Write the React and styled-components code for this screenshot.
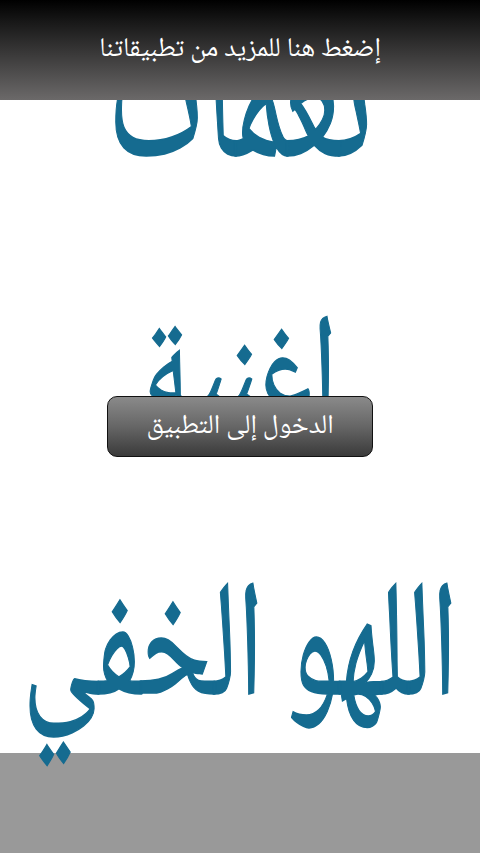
import styled, { createGlobalStyle } from "styled-components";

const GlobalStyle = createGlobalStyle`
    html, body {
        margin: 0;
        padding: 0;
        background: #ffffff;
    }
    body {
        font-family: "Noto Naskh Arabic", "DejaVu Sans", sans-serif;
    }
`;

// the poster words are stretched upward like the original splash image
const words = [
    { text: "نغمات", size: 125, box: 222, stretch: 1.6 },
    { text: "اغنية", size: 105, box: 314, stretch: 1.33 },
    { text: "اللهو الخفي", size: 110, box: 244, stretch: 1.5 },
];

export default function App() {
    return (
        <Screen dir="rtl">
            <GlobalStyle />
            <Poster>
                {words.map((w) => (
                    <Word key={w.text} size={w.size} box={w.box} stretch={w.stretch}>
                        {w.text}
                    </Word>
                ))}
            </Poster>
            <AdBand />
            <TopBar>إضغط هنا للمزيد من تطبيقاتنا</TopBar>
            <EnterButton>الدخول إلى التطبيق</EnterButton>
        </Screen>
    );
}

const Screen = styled.div`
    position: relative;
    width: 480px;
    height: 853px;
    overflow: hidden;
    display: flex;
    flex-direction: column;
    background: #ffffff;
`;

const Poster = styled.div`
    height: 753px;
    flex-shrink: 0;
    display: flex;
    flex-direction: column;
    align-items: center;
`;

const Word = styled.div`
    height: ${(p) => p.box}px;
    flex-shrink: 0;
    display: flex;
    align-items: center;
    font-family: "Noto Naskh Arabic", "DejaVu Sans", serif;
    font-size: ${(p) => p.size}px;
    line-height: 1;
    color: #156b90;
    -webkit-text-stroke: 1px #156b90;
    white-space: nowrap;
    transform: scaleY(${(p) => p.stretch});
`;

const AdBand = styled.div`
    height: 100px;
    flex-shrink: 0;
    background: #999999;
`;

const TopBar = styled.div`
    position: absolute;
    top: 0;
    left: 0;
    right: 0;
    height: 100px;
    display: flex;
    align-items: center;
    justify-content: center;
    box-sizing: border-box;
    background: linear-gradient(to bottom, #000000 0%, #161616 20%, #6b6969 100%);
    color: #ffffff;
    font-family: "Noto Naskh Arabic", "DejaVu Sans", serif;
    font-size: 27px;
`;

const EnterButton = styled.div`
    position: absolute;
    left: 107px;
    top: 396px;
    width: 266px;
    height: 61px;
    box-sizing: border-box;
    display: flex;
    align-items: center;
    justify-content: center;
    border: 1px solid #111111;
    border-radius: 10px;
    background: linear-gradient(to bottom, #8a8a8a 0%, #666666 50%, #3a3a3a 100%);
    color: #ffffff;
    font-family: "Noto Naskh Arabic", "DejaVu Sans", serif;
    font-size: 27px;
`;
